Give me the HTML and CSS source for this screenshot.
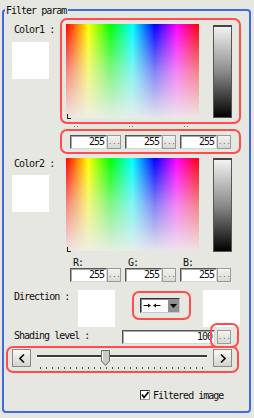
FILE: index.html
```html
<!DOCTYPE html>
<html>
<head>
<meta charset="utf-8">
<link rel="stylesheet" href="styles.css">
</head>
<body>
<div class="group">
  <div class="group-title">Filter param</div>

  <div class="color-row first">
    <div class="side">
      <div class="lbl">Color1 :</div>
      <div class="swatch"></div>
    </div>
    <div class="picker hl">
      <div class="spectrum"><span class="cursor"></span></div>
      <div class="lum"></div>
    </div>
  </div>

  <div class="dots-row"><span class="dots"></span><span class="dots"></span><span class="dots"></span></div>

  <div class="rgb-row boxed hl">
    <div class="num"><span class="field">255</span><span class="btn">...</span></div>
    <div class="num"><span class="field">255</span><span class="btn">...</span></div>
    <div class="num"><span class="field">255</span><span class="btn">...</span></div>
  </div>

  <div class="color-row second">
    <div class="side">
      <div class="lbl">Color2 :</div>
      <div class="swatch"></div>
    </div>
    <div class="picker">
      <div class="spectrum"><span class="cursor"></span></div>
      <div class="lum"></div>
    </div>
  </div>

  <div class="rgb-labels"><span>R:</span><span>G:</span><span>B:</span></div>
  <div class="rgb-row plain">
    <div class="num"><span class="field">255</span><span class="btn">...</span></div>
    <div class="num"><span class="field">255</span><span class="btn">...</span></div>
    <div class="num"><span class="field">255</span><span class="btn">...</span></div>
  </div>

  <div class="dir-row">
    <div class="dir-lbl">Direction :</div>
    <div class="box"></div>
    <div class="dd-hl hl">
      <div class="dropdown">
        <svg class="arrows" width="18" height="7" viewBox="0 0 18 7">
          <line x1="0.5" y1="3.5" x2="6" y2="3.5" stroke="#111" stroke-width="1"/>
          <polygon points="5,1.5 8,3.5 5,5.5" fill="#111"/>
          <line x1="12" y1="3.5" x2="17.5" y2="3.5" stroke="#111" stroke-width="1"/>
          <polygon points="13,1.5 10,3.5 13,5.5" fill="#111"/>
        </svg>
        <span class="dd-arrow"><svg width="7" height="4" viewBox="0 0 7 4"><polygon points="0,0 7,0 3.5,4" fill="#000"/></svg></span>
      </div>
    </div>
    <div class="box right"></div>
  </div>

  <div class="shade-row">
    <div class="shade-lbl">Shading level :</div>
    <span class="field long">100</span>
    <span class="btn">...</span>
    <div class="btn-hl hl"></div>
  </div>

  <div class="slider hl">
    <span class="sbtn"><svg width="6" height="9" viewBox="0 0 6 9"><polyline points="5,0.5 1,4.5 5,8.5" fill="none" stroke="#111" stroke-width="1.6"/></svg></span>
    <div class="track-area">
      <div class="rail"></div>
      <div class="ticks"></div>
      <svg class="thumb" width="9" height="16" viewBox="0 0 9 16"><polygon points="0.5,0.5 8.5,0.5 8.5,11 4.5,15.5 0.5,11" fill="#c9c9c5" stroke="#6a6a6a" stroke-width="1"/><line x1="1.5" y1="1.5" x2="1.5" y2="10.5" stroke="#fff" stroke-width="1"/></svg>
    </div>
    <span class="sbtn"><svg width="6" height="9" viewBox="0 0 6 9"><polyline points="1,0.5 5,4.5 1,8.5" fill="none" stroke="#111" stroke-width="1.6"/></svg></span>
  </div>

  <div class="check-row">
    <span class="cb"><svg width="8" height="8" viewBox="0 0 8 8"><polyline points="1,3.5 3,6.5 7.5,1" fill="none" stroke="#000" stroke-width="1.6"/></svg></span>
    <span class="cb-lbl">Filtered image</span>
  </div>
</div>
</body>
</html>
```

FILE: styles.css
```css
* { box-sizing: border-box; }
html, body { margin: 0; padding: 0; }
body {
  width: 254px;
  height: 418px;
  padding-top: 9px;
  background: #e7e7e2;
  font-family: "DejaVu Sans Mono", monospace;
  font-size: 10px;
  letter-spacing: -1px;
  color: #0e0e0e;
  overflow: hidden;
}
.group {
  margin-left: 2px;
  width: 249px;
  height: 404px;
  border: 2px solid #4169e1;
  border-radius: 4px;
}
.group-title {
  width: fit-content;
  margin: -6px 0 0 1px;
  padding: 0 2px 0 1px;
  background: #e7e7e2;
  line-height: 12px;
  white-space: nowrap;
}
.hl {
  border: 2px solid #ff4d4d;
  border-radius: 7px;
}

/* colour pickers */
.color-row { display: flex; align-items: flex-start; }
.first { margin-top: 1px; }
.second { margin-top: 4px; }
.side { margin-left: 8px; width: 37px; flex: none; }
.first .side { padding-top: 6px; }
.lbl { line-height: 12px; padding-left: 2px; white-space: nowrap; }
.swatch { width: 37px; height: 37px; background: #fff; }
.first .swatch { margin-top: 6px; }
.second .swatch { margin-top: 5px; }
.picker { display: flex; align-items: flex-start; flex: none; }
.first .picker { margin-left: 11px; width: 181px; height: 106px; padding: 4px 0 0 4px; }
.second .picker { margin-left: 17px; }
.spectrum {
  position: relative;
  width: 133px;
  height: 94px;
  background:
    linear-gradient(to bottom, rgba(238,238,236,0) 0%, rgba(238,238,236,0.55) 50%, rgba(238,238,236,0.96) 100%),
    linear-gradient(to right, #f00 0%, #ff0 16.7%, #0f0 33.3%, #0ff 50%, #00f 66.7%, #f0f 83.3%, #f00 100%);
}
.second .spectrum { height: 93px; }
.cursor {
  position: absolute;
  left: 1px;
  bottom: -1px;
  width: 4px;
  height: 5px;
  border-left: 1px solid #222;
  border-bottom: 1px solid #222;
}
.lum {
  width: 19px;
  margin-left: 14px;
  background: linear-gradient(#f2f2f2, #8a8a8a 50%, #000);
  border: 1px solid #555;
  border-top: 2px solid #444;
}
.first .lum { height: 93px; margin-top: 1px; }
.second .lum { height: 94px; }

.dots-row { display: flex; gap: 49px; margin-top: 2px; padding-left: 70px; height: 1px; }
.dots { width: 6px; height: 1px; background: repeating-linear-gradient(to right, #777 0 1px, transparent 1px 3px); }

/* numeric rows */
.rgb-row { display: flex; gap: 4px; }
.boxed { margin: 2px 0 0 56px; width: 181px; height: 25px; padding: 4px 0 0 8px; }
.plain { margin-left: 66px; }
.num { display: flex; }
.field {
  display: block;
  width: 37px;
  height: 14px;
  background: #fff;
  border: 1px solid;
  border-color: #555 #d6d6d6 #d6d6d6 #555;
  box-shadow: inset 1px 1px 0 #a8a8a8;
  text-align: right;
  padding-right: 2px;
  line-height: 12px;
}
.btn {
  display: block;
  width: 14px;
  height: 14px;
  flex: none;
  border: 1px solid #9a9a9a;
  background: linear-gradient(#f3f3ef, #d9d9d3);
  color: #666;
  font-size: 7px;
  letter-spacing: 0;
  line-height: 13px;
  text-align: center;
}
.rgb-labels { display: flex; margin-top: 6px; padding-left: 69px; line-height: 10px; }
.rgb-labels span { display: block; width: 55px; }

/* direction */
.dir-row { display: flex; align-items: flex-start; margin-top: 8px; }
.dir-lbl { margin: 1px 0 0 10px; width: 64px; line-height: 12px; white-space: nowrap; flex: none; }
.box { width: 37px; height: 37px; background: #fff; flex: none; }
.box.right { margin-left: 12px; }
.dd-hl { margin: 1px 0 0 17px; width: 59px; height: 29px; padding: 5px 0 0 6px; flex: none; }
.dropdown {
  display: flex;
  align-items: center;
  width: 40px;
  height: 15px;
  background: #fff;
  border: 1px solid;
  border-color: #333 #c8c8c8 #c8c8c8 #333;
  box-shadow: inset 1px 1px 0 #8a8a8a;
}
.arrows { margin-left: 2px; }
.dd-arrow {
  display: flex;
  align-items: center;
  justify-content: center;
  margin-left: auto;
  width: 11px;
  height: 13px;
  background: #8f8f8f;
}

/* shading */
.shade-row { position: relative; display: flex; align-items: flex-start; margin-top: 3px; }
.shade-lbl { margin-left: 10px; width: 108px; line-height: 12px; white-space: nowrap; flex: none; }
.field.long { width: 93px; }
.shade-row .btn { margin-left: 2px; }
.btn-hl { position: absolute; left: 206px; top: -7px; width: 29px; height: 25px; }

/* slider */
.slider { display: flex; align-items: flex-start; margin: 2px 0 0 2px; width: 233px; height: 27px; padding: 1px 0 0 4px; }
.sbtn {
  display: flex;
  align-items: center;
  justify-content: center;
  width: 19px;
  height: 18px;
  flex: none;
  border: 1px solid #8a8a8a;
  background: linear-gradient(#f8f8f5, #d4d4ce);
}
.track-area { position: relative; width: 182px; height: 22px; flex: none; }
.rail { margin: 6px 6px 0; height: 2px; background: #3a3a3a; box-shadow: 0 1px 0 #fff; }
.ticks { margin: 10px 0 0 9px; width: 167px; height: 2px; background: repeating-linear-gradient(to right, #555 0 1px, transparent 1px 6px); }
.thumb { position: absolute; left: 70px; top: 1px; }

/* checkbox */
.check-row { display: flex; align-items: flex-start; margin-top: 17px; padding-left: 136px; }
.cb {
  display: flex;
  align-items: center;
  justify-content: center;
  width: 10px;
  height: 10px;
  background: #fff;
  border: 1px solid;
  border-color: #333 #999 #999 #333;
}
.cb-lbl { margin-left: 3px; line-height: 12px; white-space: nowrap; }
```
